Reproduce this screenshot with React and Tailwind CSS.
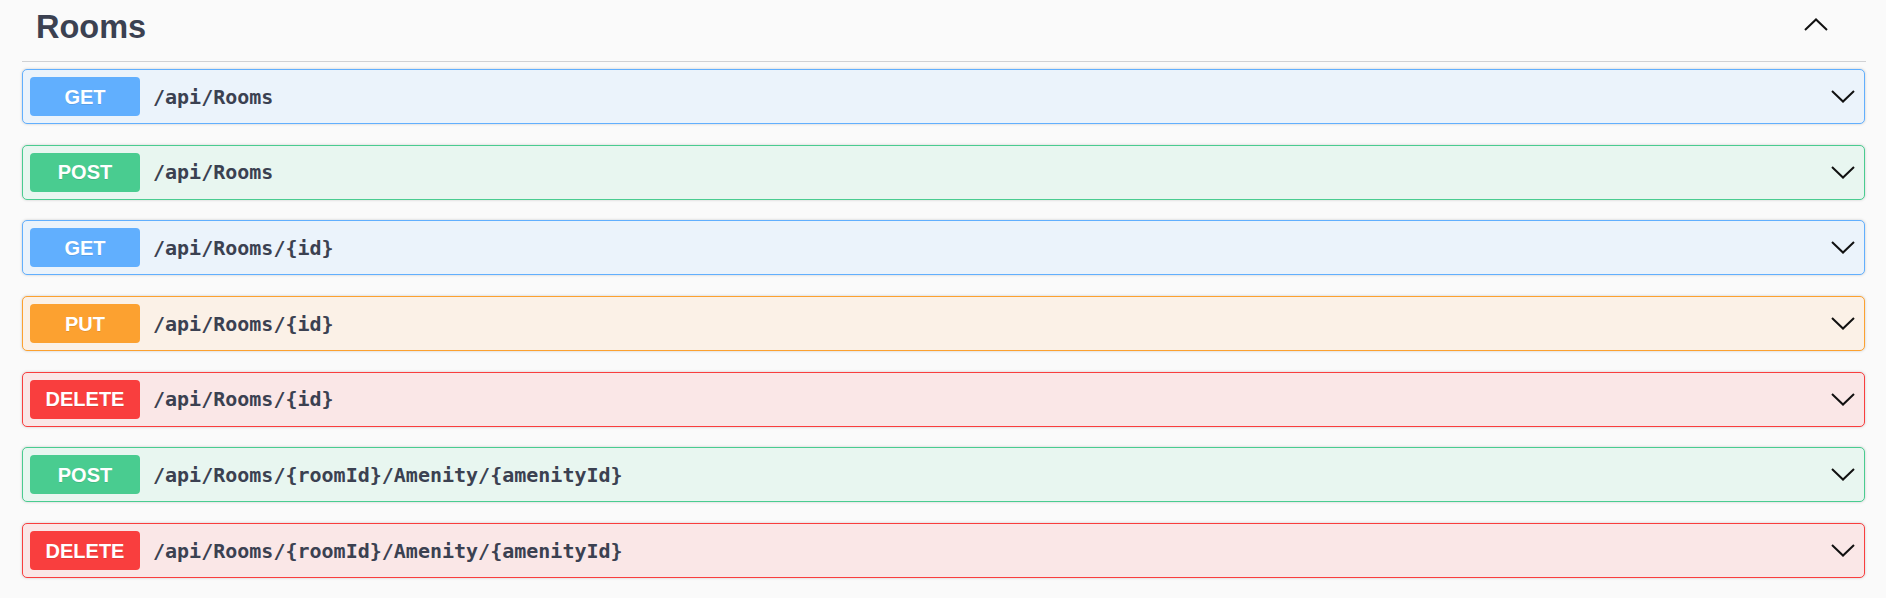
import React from "react";

const ops = [
  { m: "GET", p: "/api/Rooms", badge: "bg-[#61affe]", box: "bg-[#ebf3fb] border-[#61affe]" },
  { m: "POST", p: "/api/Rooms", badge: "bg-[#49cc90]", box: "bg-[#e8f6f0] border-[#49cc90]" },
  { m: "GET", p: "/api/Rooms/{id}", badge: "bg-[#61affe]", box: "bg-[#ebf3fb] border-[#61affe]" },
  { m: "PUT", p: "/api/Rooms/{id}", badge: "bg-[#fca130]", box: "bg-[#fbf1e7] border-[#fca130]" },
  { m: "DELETE", p: "/api/Rooms/{id}", badge: "bg-[#f93e3e]", box: "bg-[#fae7e7] border-[#f93e3e]" },
  { m: "POST", p: "/api/Rooms/{roomId}/Amenity/{amenityId}", badge: "bg-[#49cc90]", box: "bg-[#e8f6f0] border-[#49cc90]" },
  { m: "DELETE", p: "/api/Rooms/{roomId}/Amenity/{amenityId}", badge: "bg-[#f93e3e]", box: "bg-[#fae7e7] border-[#f93e3e]" },
];

function Chevron({ up }) {
  return (
    <svg width="24" height="13" viewBox="0 0 24 13" fill="none" stroke="#111" strokeWidth="2">
      {up ? <polyline points="1,12 12,1.5 23,12" /> : <polyline points="1,1 12,11.5 23,1" />}
    </svg>
  );
}

export default function App() {
  return (
    <div className="w-full h-[598px] bg-[#fafafa] pl-[22px] pr-[20px] overflow-hidden" style={{ fontFamily: '"Liberation Sans", Arial, sans-serif' }}>
      <div className="h-[62px] flex justify-between border-b border-[#d0d1d4]">
        <h2 className="pl-[14px] pt-[10.5px] text-[32.5px] leading-[32.5px] font-bold text-[#3b4151]">Rooms</h2>
        <div className="mt-[18px] mr-[38px]">
          <Chevron up />
        </div>
      </div>
      <div className="pt-[7px] pr-[1px]">
        {ops.map((o, i) => (
          <div
            key={i}
            className={`flex items-center h-[55px] px-[7px] border rounded-[5px] mb-[20.7px] shadow-[0_0_3px_rgba(0,0,0,0.19)] ${o.box}`}
          >
            <div
              className={`w-[110px] h-[39px] rounded-[4px] flex items-center justify-center text-white text-[20px] font-bold [text-shadow:0_1px_0_rgba(0,0,0,0.1)] ${o.badge}`}
            >
              {o.m}
            </div>
            <div
              className="ml-[13px] flex-1 text-[20px] font-bold text-[#3b4151]"
              style={{ fontFamily: '"DejaVu Sans Mono", monospace' }}
            >
              {o.p}
            </div>
            <div className="mr-[2px] flex items-center">
              <Chevron />
            </div>
          </div>
        ))}
      </div>
    </div>
  );
}
